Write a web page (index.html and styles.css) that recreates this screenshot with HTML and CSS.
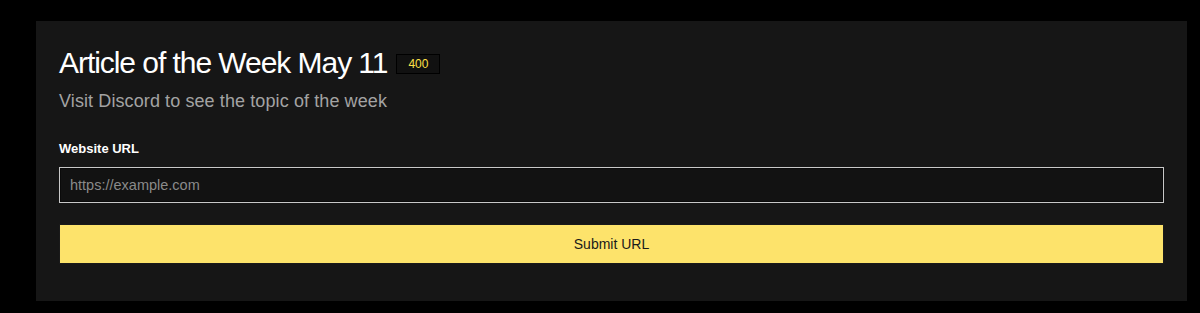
FILE: index.html
```html
<!DOCTYPE html>
<html>
<head>
<meta charset="utf-8">
<link rel="stylesheet" href="styles.css">
</head>
<body>
<div class="page">
  <section class="card">
    <div class="head">
      <h1 class="title">Article of the Week May 11</h1>
      <span class="badge">400</span>
    </div>
    <p class="sub">Visit Discord to see the topic of the week</p>
    <form class="form">
      <label class="label" for="url">Website URL</label>
      <input class="input" id="url" type="text" placeholder="https://example.com">
      <button class="btn" type="button">Submit URL</button>
    </form>
  </section>
</div>
</body>
</html>
```
FILE: styles.css
```css
* { box-sizing: border-box; }
html, body { margin: 0; padding: 0; background: #000; }
body { font-family: "Liberation Sans", Arial, sans-serif; color: #fff; }
.page { padding: 21px 13px 12px 36px; }
.card {
  background: #161616;
  width: 1151px;
  height: 280px;
  padding: 24px 23px 0 23px;
}
.head { display: flex; align-items: center; gap: 9px; }
.title {
  margin: 0;
  font-size: 30px;
  font-weight: 400;
  letter-spacing: -1.05px;
  line-height: 36px;
  color: #fff;
}
.badge {
  display: inline-block;
  width: 44px;
  height: 20px;
  text-align: center;
  background: #111;
  border: 1px solid #000;
  color: #fde047;
  font-size: 12px;
  line-height: 18px;
  margin-top: 1px;
}
.sub {
  margin: 8px 0 0;
  font-size: 18px;
  letter-spacing: 0.1px;
  line-height: 24px;
  color: #a3a3a3;
}
.form { display: flex; flex-direction: column; }
.label {
  margin-top: 27px;
  font-size: 13px;
  font-weight: 700;
  line-height: 18px;
  color: #fff;
}
.input {
  margin-top: 9px;
  height: 36px;
  background: #121212;
  border: 1px solid #c8c8c8;
  box-shadow: inset 0 0 0 1px #0a0a0a;
  padding: 0 10px;
  font-family: inherit;
  font-size: 14.5px;
  color: #fff;
  outline: none;
}
.input::placeholder { color: #8a8a8a; }
.btn {
  margin-top: 21px;
  height: 40px;
  background: #fde36b;
  border: 1px solid #1a1a1a;
  font-family: inherit;
  font-size: 14px;
  color: #1a1a1a;
  cursor: pointer;
}
```
